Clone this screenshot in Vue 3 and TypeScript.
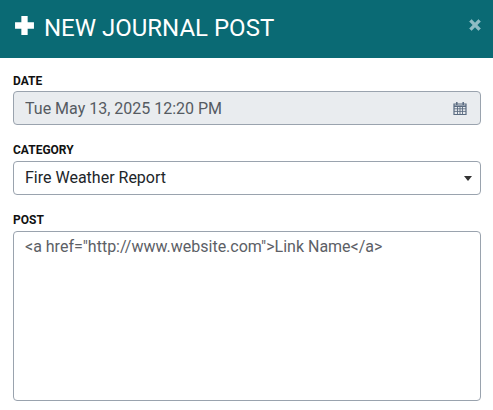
<script setup lang="ts">
const date: string = 'Tue May 13, 2025 12:20 PM'
const post: string = '<a href="http://www.website.com">Link Name</a>'
const categories: string[] = ['Fire Weather Report']
</script>

<template>
  <div class="modal">
    <header class="head">
      <h1 class="title">
        <svg class="plus" viewBox="0 0 20 20" aria-hidden="true">
          <path d="M7 1h6v6h6v6h-6v6H7v-6H1V7h6z" fill="#fff" />
        </svg>
        <span>NEW JOURNAL POST</span>
      </h1>
      <svg class="close" viewBox="0 0 14 14" aria-hidden="true">
        <path d="M1.5 3.6 3.6 1.500 7 4.900l3.400-3.400 2.100 2.100L9.100 7l3.400 3.400-2.100 2.100L7 9.100l-3.400 3.400-2.100-2.100L4.900 7z" fill="#8fbcc4" stroke="#8fbcc4" stroke-width=".6" stroke-linejoin="round" />
      </svg>
    </header>
    <main class="body">
      <div class="field">
        <label class="label">DATE</label>
        <div class="control-wrap">
          <input class="control readonly" type="text" :value="date" readonly />
          <svg class="cal" viewBox="0 0 14 14" aria-hidden="true">
            <path d="M1 3h12v10.500H1z" fill="none" stroke="#5a6b80" stroke-width="1.200" />
            <path d="M1 5.200h12" stroke="#5a6b80" stroke-width="1.600" />
            <path d="M4.500 5v8M7 5v8M9.500 5v8M1 7.800h12M1 10.400h12" stroke="#5a6b80" stroke-width=".9" />
            <path d="M3.800 1v3M10.200 1v3" stroke="#5a6b80" stroke-width="1.500" />
          </svg>
        </div>
      </div>
      <div class="field">
        <label class="label">CATEGORY</label>
        <div class="control-wrap">
          <select class="control select">
            <option v-for="c in categories" :key="c">{{ c }}</option>
          </select>
          <span class="caret"></span>
        </div>
      </div>
      <div class="field">
        <label class="label">POST</label>
        <textarea class="control area" :value="post"></textarea>
      </div>
    </main>
  </div>
</template>

<style>
html, body { margin: 0; background: #fff; }
</style>

<style scoped>
.modal {
  width: 493px;
  height: 410px;
  overflow: hidden;
  font-family: Roboto, "Liberation Sans", sans-serif;
  background: #fff;
}
.head {
  height: 58px;
  background: #0a6a74;
  display: flex;
  align-items: flex-start;
  justify-content: space-between;
  padding: 15px 11px 0 14px;
  box-sizing: border-box;
}
.title {
  margin: 0;
  display: flex;
  align-items: center;
  gap: 9px;
  color: #fff;
  font-size: 24px;
  font-weight: 400;
  line-height: 24px;
}
.plus { width: 21px; height: 21px; margin-bottom: 5px; }
.close { width: 14px; height: 14px; margin-top: 3px; }
.body {
  padding: 16px 12px 0 13px;
  display: flex;
  flex-direction: column;
  gap: 18px;
}
.field { display: flex; flex-direction: column; }
.label {
  font-size: 12px;
  line-height: 14px;
  font-weight: 700;
  color: #111;
  margin-bottom: 4px;
}
.field:first-child .label { margin-bottom: 3px; }
.control-wrap { position: relative; }
.control {
  display: block;
  width: 100%;
  box-sizing: border-box;
  height: 34px;
  border: 1px solid #9aa3ae;
  border-radius: 4px;
  padding: 0 11px;
  font: 400 16px/24px Roboto, "Liberation Sans", sans-serif;
  color: #555b62;
  background: #fff;
  outline: none;
  margin: 0;
}
.readonly { background: #e9ecef; }
.select {
  appearance: none;
  color: #212529;
}
.area {
  height: 170px;
  padding: 3px 11px;
  color: #5c6066;
  resize: none;
}
.cal {
  position: absolute;
  right: 14px;
  top: 10px;
  width: 14px;
  height: 14px;
}
.caret {
  position: absolute;
  right: 9px;
  top: 15px;
  border-left: 4px solid transparent;
  border-right: 4px solid transparent;
  border-top: 5px solid #333;
}
</style>
